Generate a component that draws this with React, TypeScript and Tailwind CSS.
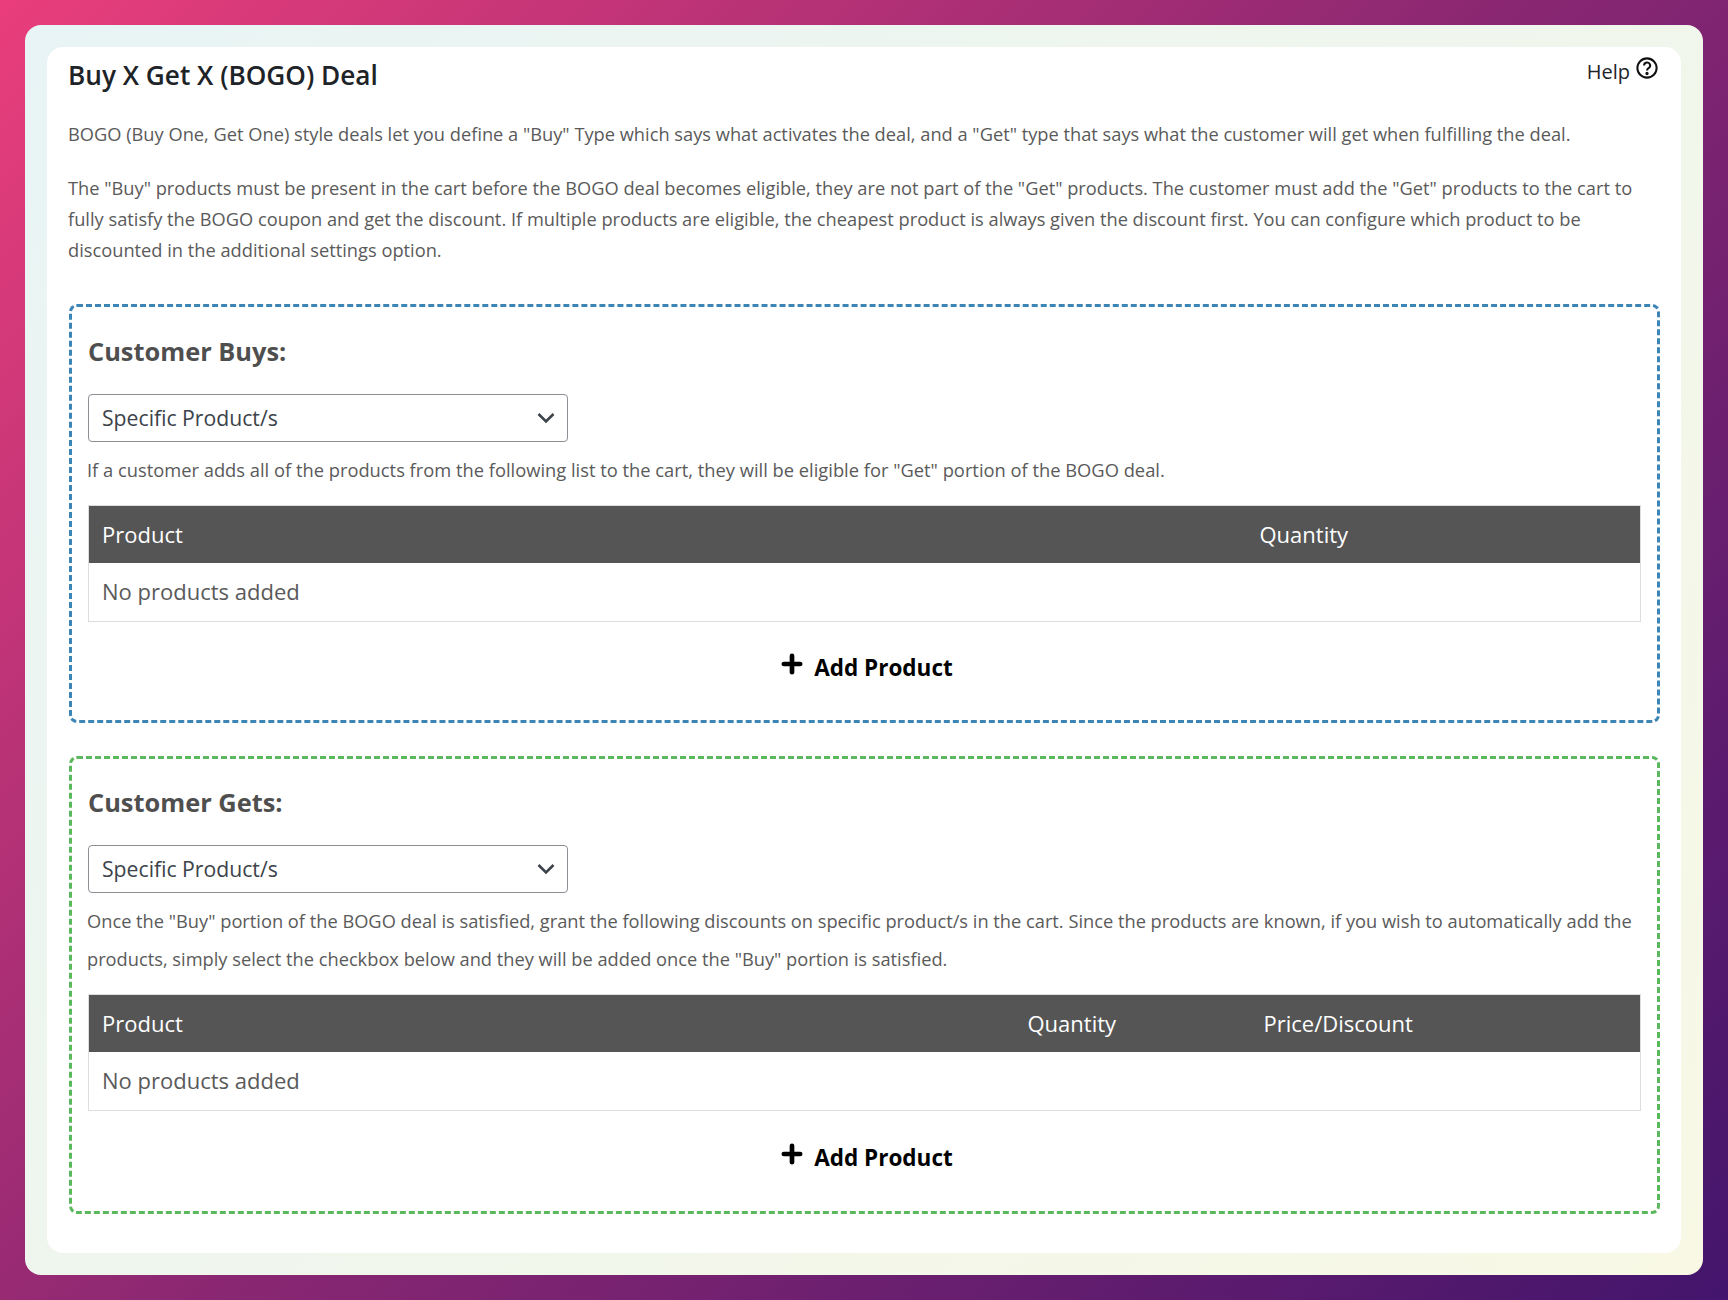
import React from 'react';
import { Plus } from 'lucide-react';

const font = { fontFamily: '"Open Sans", "Noto Sans", sans-serif' };

const DealSelect: React.FC = () => (
  <div className="relative w-[480px] h-[48px]">
    <select className="w-full h-full appearance-none bg-white border border-[#8c8f94] rounded-[4px] pl-[13px] pr-10 text-[21.2px] text-[#3c434a] outline-none">
      <option>Specific Product/s</option>
    </select>
    <svg className="absolute right-[13px] top-[17px] pointer-events-none" width="18" height="14" viewBox="0 0 18 14" fill="none">
      <path d="M1.5 3 L9 10.5 L16.5 3" stroke="#3c434a" strokeWidth="2.6" />
    </svg>
  </div>
);

const AddProduct: React.FC = () => (
  <button className="flex items-center justify-center gap-[8px] mx-auto pl-[2px] text-black font-bold text-[22.5px] leading-[30px]">
    <Plus size={28} strokeWidth={4} className="relative -top-[4px]" />
    <span>Add Product</span>
  </button>
);

const ProductTable: React.FC<{ columns: { label: string; width: string }[] }> = ({ columns }) => (
  <table className="w-full table-fixed border border-[#dddddd] border-collapse">
    <thead>
      <tr className="bg-[#555555] text-white h-[57px]">
        {columns.map((c) => (
          <th key={c.label} className={`${c.width} px-[13px] text-left font-normal text-[22px]`}>
            {c.label}
          </th>
        ))}
      </tr>
    </thead>
    <tbody>
      <tr className="h-[59px]">
        <td colSpan={columns.length} className="px-[13px] text-[22px] text-[#5a5a5a]">
          No products added
        </td>
      </tr>
    </tbody>
  </table>
);

export default function App() {
  return (
    <div style={font} className="w-full min-h-[1300px] p-[25px] bg-[linear-gradient(135deg,#e93e7b_0%,#8a2772_50%,#43156c_100%)]">
      <div className="rounded-[16px] p-[22px] bg-[linear-gradient(135deg,#e8f4f5,#f8f8e5)]">
        <div className="relative bg-white rounded-[16px] pl-[22px] pr-[21px] pt-[10px] h-[1206px]">
          {/* Title row */}
          <div className="flex items-start justify-between">
            <h1 className="-ml-px text-[26.2px] leading-[36px] font-semibold text-[#1d2327]">Buy X Get X (BOGO) Deal</h1>
            <a className="mt-px mr-px flex items-center gap-[7px] text-[20px] leading-[28px] text-[#1d2327]">
              Help
              <svg width="22" height="22" viewBox="0 0 24 24" fill="none" stroke="#111" strokeWidth="2.2" className="relative -top-[4px] -left-px">
                <circle cx="12" cy="12" r="10.5" />
                <path d="M8.8 9.2a3.3 3.3 0 1 1 4.9 2.9c-1.1.7-1.7 1.3-1.7 2.7" />
                <circle cx="12" cy="18" r="0.7" fill="#111" />
              </svg>
            </a>
          </div>

          <p className="-ml-px mt-[25px] text-[18.25px] leading-[31px] text-[#5a5a5a]">
            BOGO (Buy One, Get One) style deals let you define a "Buy" Type which says what activates the deal, and a "Get" type that says what the customer will get when fulfilling the deal.
          </p>
          <p className="-ml-px mt-[23px] text-[18.25px] leading-[31px] text-[#5a5a5a]">
            The "Buy" products must be present in the cart before the BOGO deal becomes eligible, they are not part of the "Get" products. The customer must add the "Get" products to the cart to fully satisfy the BOGO coupon and get the discount. If multiple products are eligible, the cheapest product is always given the discount first. You can configure which product to be discounted in the additional settings option.
          </p>

          {/* Customer Buys */}
          <section className="mt-[39px] border-[3px] border-dashed border-[#3d85b5] rounded-[8px] px-[16px] pt-[26px] h-[419px]">
            <h2 className="text-[25.4px] leading-[36px] font-bold text-[#4f4f4f] mb-[25px]">Customer Buys:</h2>
            <DealSelect />
            <p className="mt-[14px] -ml-px text-[18.32px] leading-[28px] text-[#5a5a5a] mb-[21px]">
              If a customer adds all of the products from the following list to the cart, they will be eligible for "Get" portion of the BOGO deal.
            </p>
            <ProductTable columns={[{ label: 'Product', width: 'w-[1158px]' }, { label: 'Quantity', width: '' }]} />
            <div className="mt-[31px]">
              <AddProduct />
            </div>
          </section>

          {/* Customer Gets */}
          <section className="mt-[33px] border-[3px] border-dashed border-[#5cb85c] rounded-[8px] px-[16px] pt-[25px] h-[458px]">
            <h2 className="text-[25.4px] leading-[36px] font-bold text-[#4f4f4f] mb-[25px]">Customer Gets:</h2>
            <DealSelect />
            <p className="mt-[9px] -ml-px text-[18.25px] leading-[38px] text-[#5a5a5a] mb-[16px]">
              Once the "Buy" portion of the BOGO deal is satisfied, grant the following discounts on specific product/s in the cart. Since the products are known, if you wish to automatically add the products, simply select the checkbox below and they will be added once the "Buy" portion is satisfied.
            </p>
            <ProductTable
              columns={[
                { label: 'Product', width: 'w-[926px]' },
                { label: 'Quantity', width: 'w-[236px]' },
                { label: 'Price/Discount', width: '' },
              ]}
            />
            <div className="mt-[32px]">
              <AddProduct />
            </div>
          </section>
        </div>
      </div>
    </div>
  );
}
